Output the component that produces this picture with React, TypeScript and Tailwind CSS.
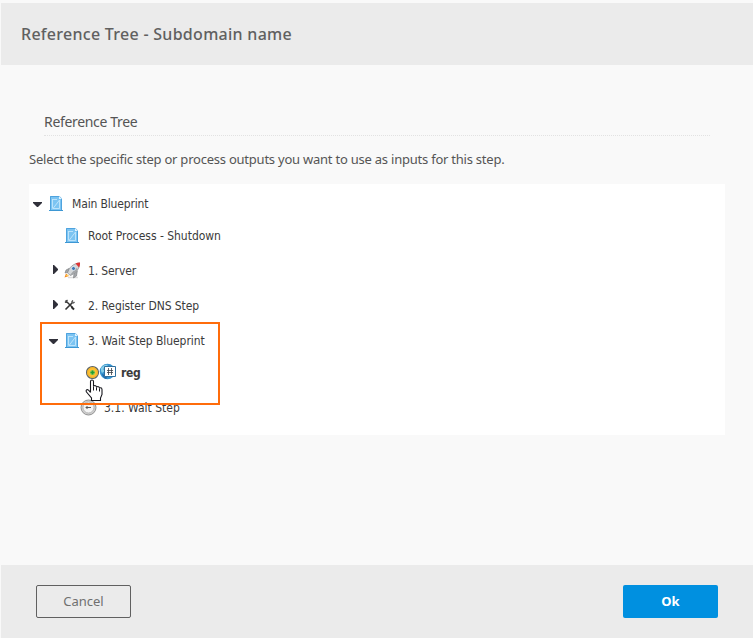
import React from 'react';

const Blueprint = () => (
  <svg width="14" height="17" viewBox="0 0 14 17" className="block shrink-0">
    <path d="M1 1h9.500L13 3.500V16H1z" fill="#7cc4f2" />
    <path d="M1.500 15.500v-14h9L12.500 3.500v12" fill="none" stroke="#4fa3de" />
    <path d="M10 1v3h3z" fill="#e2f4ff" />
    <path d="M10.500 5 4 13.500h6.500zM3.500 4v9.500M3 4.500h5" fill="none" stroke="#c3e7fc" strokeWidth=".9" />
    <path d="M0 15.500h14" stroke="#3d97d3" />
  </svg>
);

const Rocket = () => (
  <svg width="17" height="17" viewBox="0 0 17 17" className="block shrink-0">
    <path d="M4 15.500h10" stroke="#ddd" strokeWidth="1.500" />
    <path d="M.5 15.500 2 11.500l3 2.500z" fill="#f48a20" />
    <path d="m2 14 1-1.500L4.500 14z" fill="#ffe05a" />
    <path d="M5 6.500 2 8 1 11l4-1zM10 11l-.5 5 3-2 .8-5z" fill="#a4a7aa" stroke="#777a7d" strokeWidth=".6" />
    <path d="M3.500 11C5 5.500 9 1.500 15.500 1 16 6.500 12 11 6.500 13.500z" fill="#d4d7d9" stroke="#85888b" strokeWidth=".7" />
    <path d="m6 13 6-7 2 1c-2 3-4 5-7.500 6.500z" fill="#a3a6a9" />
    <path d="M11.500 1.500C13 .8 14.500.5 16 .6c.2 1.900-.2 3.400-1 4.900z" fill="#dd3434" />
    <circle cx="9.500" cy="6.500" r="2" fill="#3e78b5" stroke="#e9edf0" strokeWidth=".8" />
  </svg>
);

const Tools = () => (
  <svg width="12" height="12" viewBox="0 0 12 12" className="relative -top-px block shrink-0">
    <path d="m3 3 5.500 5.500" stroke="#333" strokeWidth="1.400" />
    <path d="m7.500 8 2.500 2.500" stroke="#292929" strokeWidth="2" />
    <path d="M1 3.500 3.500 1M1.500 1.500 3.500 3.500" stroke="#444" strokeWidth="1.200" />
    <path d="m1.500 10.500 6.500-6.500" stroke="#333" strokeWidth="1.600" />
    <path d="M9 1.500 8 2.500V4h1.500L10.500 3" fill="none" stroke="#444" strokeWidth="1.200" />
  </svg>
);

const Clock = () => (
  <svg width="17" height="17" viewBox="0 0 17 17" className="block shrink-0">
    <circle cx="8.500" cy="8.500" r="7.500" fill="#cfcfcf" stroke="#929292" />
    <circle cx="8.500" cy="8.500" r="5.500" fill="#f5f5f5" stroke="#aaa" strokeWidth=".8" />
    <path d="M9.500 4.500v1M6 8.500h5M7.500 7 6 8.500 7.500 10" fill="none" stroke="#555" />
  </svg>
);

const AddOutput = () => (
  <svg width="14" height="14" viewBox="0 0 14 14" className="relative -top-px block shrink-0">
    <circle cx="7.500" cy="7.500" r="6" fill="#ffbf32" stroke="#5c6468" strokeWidth="1.100" />
    <circle cx="7.500" cy="7.500" r="4.900" fill="none" stroke="#edb12b" />
    <circle cx="7.500" cy="7.500" r="2.600" fill="#a3cf5b" />
    <path d="M7.500 5.500v4M5.500 7.500h4" stroke="#239c32" strokeWidth="1.700" />
  </svg>
);

const Globe = () => (
  <svg width="17" height="17" viewBox="0 0 17 17" className="relative -top-px block shrink-0">
    <circle cx="8.500" cy="8.500" r="7.800" fill="#3693cf" />
    <path d="M2 5c2-3 5-4 7-3L7 4 4 6l2 2-3 2-1-2z" fill="#87cee8" />
    <path d="m3 11 3 1 2 3-1 1c-2-1-3-2-4-5z" fill="#2367a6" />
    <path d="M5.500 3.500h11v10h-11z" fill="#fff" stroke="#2d6f9f" />
    <path d="M9.500 5v7M12.500 5v7M8 7.500h6M8 9.500h6" fill="none" stroke="#3c4148" strokeWidth=".8" />
  </svg>
);

const Arrow = ({ open = false }: { open?: boolean }) => open ? (
  <svg width="9" height="5" viewBox="0 0 9 5" className="relative top-px block shrink-0"><path d="M0 0h9v1L5 5H4L0 1z" fill="#30303a" /></svg>
) : (
  <svg width="6" height="9" viewBox="0 0 6 9" className="relative -top-px block shrink-0"><path d="M0 0h1l4 4v1L1 9H0z" fill="#30303a" /></svg>
);

const Pointer = () => (
  <svg width="19" height="23" viewBox="0 0 19 23" className="absolute left-[85px] top-[379px]">
    <path d="M5.500 13.500V2.500Q5.500 1 7 1t1.500 1.500V7.500q0-1 1.300-1T11.500 8v.5q0-1 1.300-1T14.500 9v.5q0-.8 1.200-.8T17 10.500V15.500L15.500 19v2.500h-9v-2.500L1.500 13q-1-2 .8-2.500Q3.500 10.500 5.500 13.500" fill="#fff" stroke="#17171d" strokeWidth="1.100" />
    <path d="M8.500 7.500v4M11.500 8.500v3M14.500 9.500v3" stroke="#17171d" strokeWidth="1" />
  </svg>
);

export default function App() {
  return (
    <main className="relative flex h-[638px] w-[753px] flex-col overflow-hidden bg-[#f9f9f9] pl-px pt-[3px] font-['Noto_Sans',sans-serif] text-[#555]">
      <header className="flex h-[62px] shrink-0 items-center bg-[#ebebeb] pl-5">
        <h1 className="whitespace-nowrap text-[16px] font-medium leading-6 tracking-[0.28px] text-[#606060]">Reference Tree - Subdomain name</h1>
      </header>
      <section className="h-[500px] shrink-0 pl-7 pt-[46px]">
        <div className="ml-[15px] flex h-[25px] w-[666px] border-b border-dotted border-[#e2e2e2]">
          <h2 className="whitespace-nowrap text-[14px] leading-[21px] tracking-[-0.33px]">Reference Tree</h2>
        </div>
        <p className="mt-[13px] h-[35px] whitespace-nowrap text-[13px] leading-5 tracking-[-0.228px]">Select the specific step or process outputs you want to use as inputs for this step.</p>
        <div className="h-[251px] w-[696px] bg-white pt-1 font-['DejaVu_Sans_Condensed','DejaVu_Sans',sans-serif] text-[12px] text-[#3b3b3b] [&_span]:whitespace-nowrap">
          <div className="flex h-[31px] items-center pl-1"><Arrow open /><i className="w-[7px]" /><Blueprint /><span className="ml-[9px] tracking-[-0.15px]">Main Blueprint</span></div>
          <div className="mt-px flex h-[31px] items-center pl-9"><Blueprint /><span className="ml-[9px] tracking-[-0.02px]">Root Process - Shutdown</span></div>
          <div className="mt-1 flex h-[31px] items-center pl-6"><Arrow /><i className="w-[5px]" /><Rocket /><span className="ml-[7px] tracking-[-0.12px]">1. Server</span></div>
          <div className="mt-1 flex h-[31px] items-center pl-6"><Arrow /><i className="w-[5px]" /><Tools /><span className="ml-3 tracking-[-0.09px]">2. Register DNS Step</span></div>
          <div className="mt-1 flex h-[31px] items-center pl-5"><Arrow open /><i className="w-[7px]" /><Blueprint /><span className="ml-[9px] tracking-[-0.07px]">3. Wait Step Blueprint</span></div>
          <div className="mt-px flex h-[31px] items-center pl-14"><AddOutput /><Globe /><span className="ml-[5px] font-bold tracking-[-0.3px]">reg</span></div>
          <div className="mt-1 flex h-[31px] items-center pl-[51px]"><Clock /><span className="ml-[7px]">3.1. Wait Step</span></div>
        </div>
      </section>
      <footer className="flex h-[73px] shrink-0 justify-between bg-[#ebebeb] pl-[35px] pr-[35px] pt-5">
        <button className="h-[33px] w-[95px] rounded-[2px] border border-[#606060] text-[13px] text-[#707070]">Cancel</button>
        <button className="h-[33px] w-[95px] rounded-[2px] bg-[#0090e0] text-[13px] font-bold text-white">Ok</button>
      </footer>
      <div className="absolute left-10 top-[322px] h-[83px] w-[180px] border-2 border-[#ff6c0b]" />
      <Pointer />
    </main>
  );
}
